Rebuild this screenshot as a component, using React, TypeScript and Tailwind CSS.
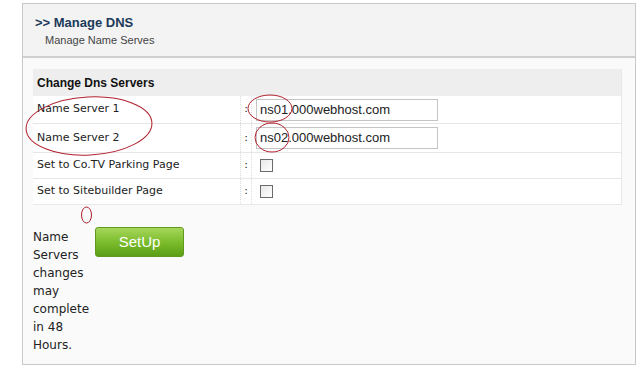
import React from "react";

const labelFont = { fontFamily: '"DejaVu Sans", Verdana, sans-serif' };
const arial = { fontFamily: '"Liberation Sans", Arial, sans-serif' };

function Row({ label, children, h, last }: { label: string; children: React.ReactNode; h: string; last?: boolean }) {
  return (
    <div className={`flex ${h} ${last ? "" : "border-b border-[#e6e6e6]"}`}>
      <div className="w-[208px] pl-[4px] flex items-center text-[11px] text-[#222] border-r border-dotted border-[#dcdcdc]">
        {label}
      </div>
      <div className="w-[11px] flex items-center justify-center text-[11px] text-[#222] border-r border-dotted border-[#dcdcdc]">:</div>
      <div className="flex-1 flex items-center pl-[4px]">{children}</div>
    </div>
  );
}

function Checkbox() {
  return (
    <div className="w-[13px] h-[13px] border border-[#6b6b6b] bg-gradient-to-br from-[#e8e8e8] to-[#ffffff] ml-[4px]" />
  );
}

function Input({ value }: { value: string }) {
  return (
    <div className="w-[182px] h-[22px] border border-[#c4c4c4] bg-white flex items-center pl-[3px] text-[13px] text-[#222]" style={arial}>
      {value}
    </div>
  );
}

export default function App() {
  return (
    <div className="relative w-[642px] h-[370px] bg-white overflow-hidden" style={labelFont}>
      <div className="ml-[22px] mt-[3px] w-[614px] h-[362px] border border-[#c8c8c8] bg-[#fafafa] flex flex-col">
        <div className="h-[54px] bg-[#f3f3f3] border-b-2 border-[#cfcfcf] pl-[12px] pt-[11px]" style={arial}>
          <div className="text-[13px] font-bold text-[#1b3a5a] leading-[16px]">&gt;&gt; Manage DNS</div>
          <div className="text-[11px] text-[#444] pl-[10px] mt-[3px] leading-[13px]">Manage Name Serves</div>
        </div>
        <div className="mt-[11px] ml-[10px] w-[589px] bg-white border-r border-b border-[#e8e8e8]">
          <div className="h-[27px] bg-[#eeeeee] flex items-center pl-[4px] text-[12px] font-bold text-[#111]" style={arial}>
            Change Dns Servers
          </div>
          <Row label="Name Server 1" h="h-[28px]">
            <Input value="ns01.000webhost.com" />
          </Row>
          <Row label="Name Server 2" h="h-[29px]">
            <Input value="ns02.000webhost.com" />
          </Row>
          <Row label="Set to Co.TV Parking Page" h="h-[26px]">
            <Checkbox />
          </Row>
          <Row label="Set to Sitebuilder Page" h="h-[25px]" last>
            <Checkbox />
          </Row>
        </div>
        <div className="flex items-start ml-[10px] mt-[23px]">
          <div className="w-[60px] text-[12px] leading-[18px] text-[#222]">
            Name Servers changes may complete in 48 Hours.
          </div>
          <button
            className="ml-[2px] mt-[-1px] w-[89px] h-[30px] rounded-[3px] border border-[#5f9a1c] bg-gradient-to-b from-[#a6d65a] via-[#7cbd2c] to-[#5c9e16] text-white text-[15px] flex items-center justify-center"
            style={arial}
          >
            SetUp
          </button>
        </div>
      </div>
      <svg className="absolute inset-0 pointer-events-none" width="642" height="370">
        <g fill="none" stroke="#b0202c" strokeWidth="1">
          <ellipse cx="89" cy="126" rx="63" ry="29" transform="rotate(-3 89 126)" />
          <ellipse cx="270" cy="108.5" rx="22" ry="13.5" />
          <ellipse cx="272" cy="137.5" rx="17" ry="14.5" />
          <ellipse cx="86.5" cy="215" rx="5" ry="8" />
        </g>
      </svg>
    </div>
  );
}
